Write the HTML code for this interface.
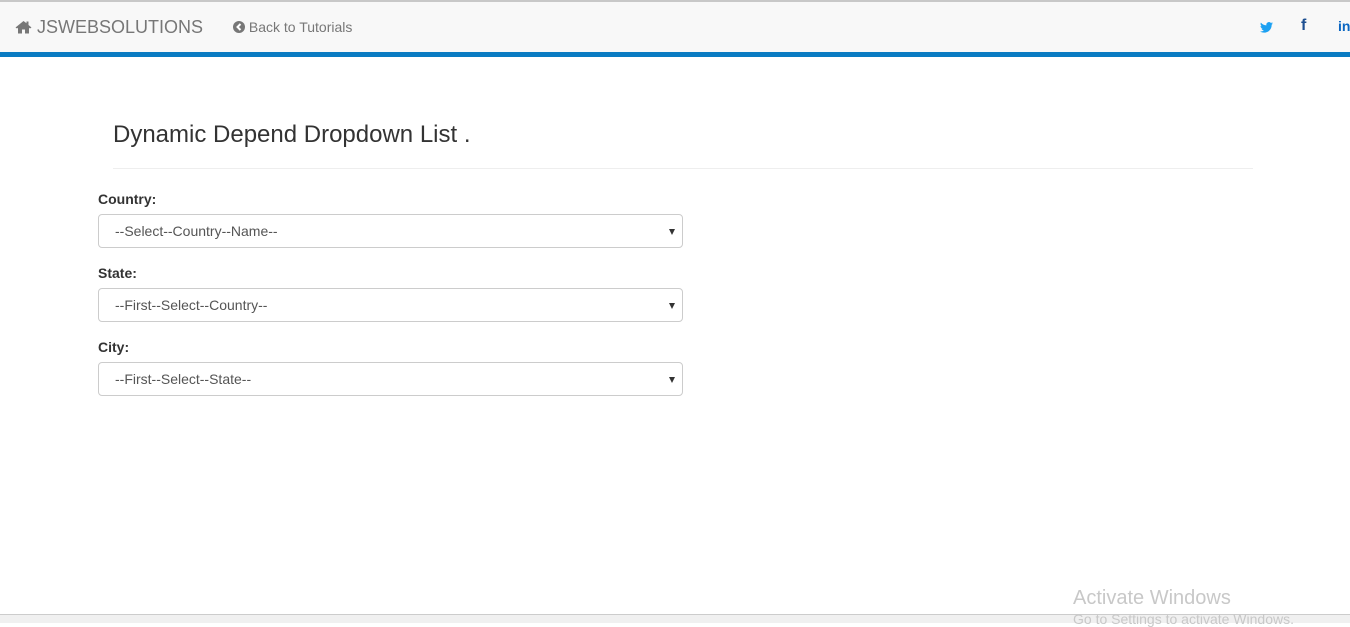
<!DOCTYPE html>
<html><head><meta charset="utf-8"><style>
*{box-sizing:border-box;margin:0;padding:0}
body{width:1350px;height:623px;overflow:hidden;background:#fff;font-family:"Liberation Sans",Arial,sans-serif;color:#333;position:relative}
.nav{position:absolute;left:0;top:0;width:1350px;height:57px;background:#f8f8f8;border-top:2px solid #c8c8c8;border-bottom:5px solid #0a7bc2}
.brand{position:absolute;left:15px;top:15px;font-size:18px;color:#777}
.back{position:absolute;left:233px;top:17px;font-size:14px;color:#777}
.ic{position:absolute;top:15px;font-size:16px;font-weight:bold}
h1{position:absolute;left:113px;top:121px;font-size:24px;font-weight:normal;color:#333}
.hr{position:absolute;left:113px;top:168px;width:1140px;border-top:1px solid #eee}
label{position:absolute;left:98px;font-size:14px;font-weight:bold;color:#333}
.sel{position:absolute;left:98px;width:585px;height:34px;border:1px solid #ccc;border-radius:4px;font-size:14px;color:#555;padding:8px 0 0 16px}
.sel:after{content:"";position:absolute;right:7px;top:14px;border-left:3px solid transparent;border-right:3px solid transparent;border-top:6px solid #333}
.foot{position:absolute;left:0;top:614px;width:1350px;height:9px;background:#f0f0f0;border-top:1px solid #ccc}
.aw{position:absolute;left:1073px;top:587px;font-size:20px;color:#c8c8c8}
.aw2{position:absolute;left:1073px;top:611px;font-size:14px;color:#c8c8c8}
</style></head><body>
<div class="nav">
<div class="brand"><svg width="17" height="14" viewBox="0 0 17 14" style="vertical-align:-1px"><path d="M8.5 1 L0.5 7.5 L2 8.5 L3 7.7 V13.5 H7 V9.5 H10 V13.5 H14 V7.7 L15 8.5 L16.5 7.5 L13.5 5 V1.5 H11.5 V3.3 Z" fill="#777"/></svg> JSWEBSOLUTIONS</div>
<div class="back"><svg width="12" height="12" viewBox="0 0 12 12" style="vertical-align:-1px"><circle cx="6" cy="6" r="6" fill="#777"/><path d="M7.5 3 L4.5 6 L7.5 9" stroke="#fff" stroke-width="2" fill="none"/></svg> Back to Tutorials</div>
<svg class="ic" style="left:1260px;top:20px" width="13" height="11" viewBox="0 0 24 20"><path d="M24 2.3a10 10 0 0 1-2.8.8A5 5 0 0 0 23.3.4a10 10 0 0 1-3.1 1.2A4.9 4.9 0 0 0 11.8 6 14 14 0 0 1 1.7.9a4.9 4.9 0 0 0 1.5 6.6A4.9 4.9 0 0 1 1 6.9a4.9 4.9 0 0 0 3.9 4.9 5 5 0 0 1-2.2.1 4.9 4.9 0 0 0 4.6 3.4A9.9 9.9 0 0 1 0 17.3 14 14 0 0 0 7.5 19.5c9 0 14-7.5 14-14v-.6A10 10 0 0 0 24 2.3z" fill="#1da1f2"/></svg>
<div class="ic" style="left:1301px;color:#1d4f91">f</div>
<div class="ic" style="left:1338px;top:16px;color:#0a66c2;font-size:14px">in</div>
</div>
<h1>Dynamic Depend Dropdown List .</h1>
<div class="hr"></div>
<label style="top:191px">Country:</label>
<div class="sel" style="top:214px">--Select--Country--Name--</div>
<label style="top:265px">State:</label>
<div class="sel" style="top:288px">--First--Select--Country--</div>
<label style="top:339px">City:</label>
<div class="sel" style="top:362px">--First--Select--State--</div>
<div class="foot"></div>
<div class="aw">Activate Windows</div>
<div class="aw2">Go to Settings to activate Windows.</div>
</body></html>
